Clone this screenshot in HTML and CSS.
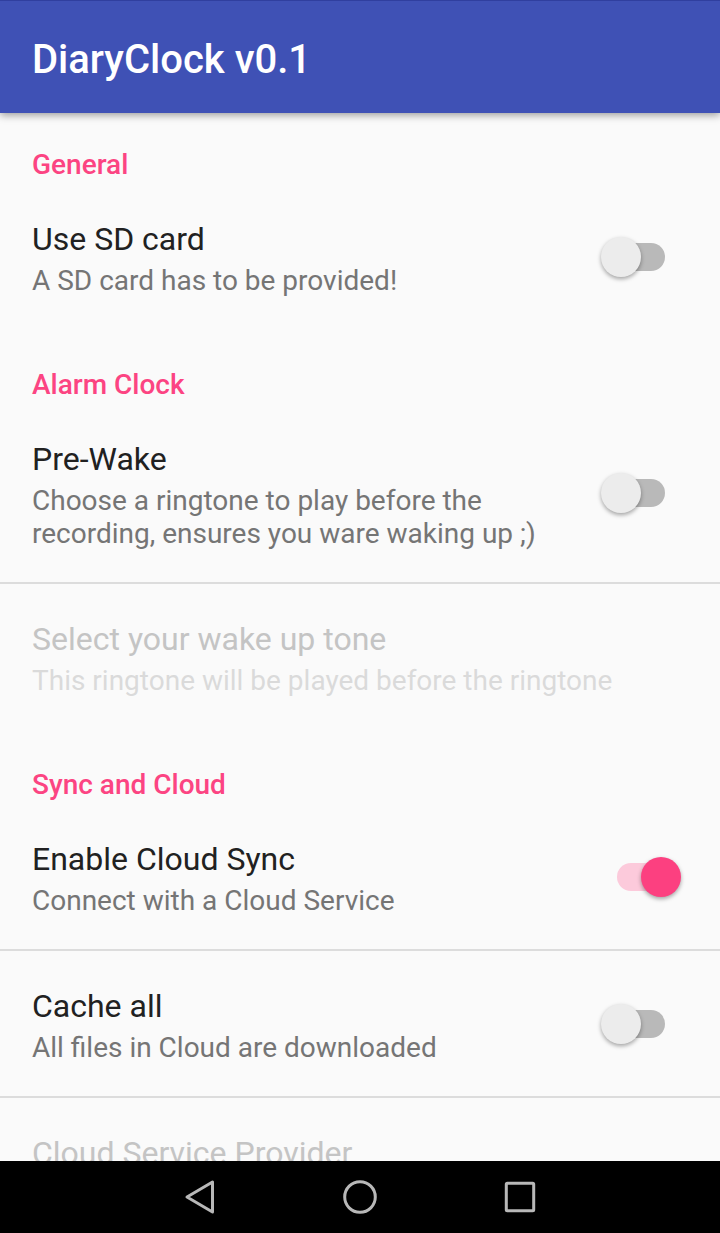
FILE: index.html
```
<!DOCTYPE html>
<html lang="en">
<head>
<meta charset="utf-8">
<meta name="viewport" content="width=device-width, initial-scale=1">
<title>DiaryClock</title>
<link rel="stylesheet" href="styles.css">
</head>
<body>
<div class="screen">
  <header class="app-bar"><h1>DiaryClock v0.1</h1></header>
  <main class="settings">
    <section class="group">
      <h2>General</h2>
      <label class="row">
        <span class="text"><span class="title">Use SD card</span><span class="summary">A SD card has to be provided!</span></span>
        <input class="switch" type="checkbox" role="switch">
      </label>
    </section>
    <section class="group">
      <h2>Alarm Clock</h2>
      <label class="row">
        <span class="text"><span class="title">Pre-Wake</span><span class="summary">Choose a ringtone to play before the recording, ensures you ware waking up ;)</span></span>
        <input class="switch" type="checkbox" role="switch">
      </label>
      <button class="row" type="button" disabled>
        <span class="text"><span class="title">Select your wake up tone</span><span class="summary">This ringtone will be played before the ringtone</span></span>
      </button>
    </section>
    <section class="group">
      <h2>Sync and Cloud</h2>
      <label class="row">
        <span class="text"><span class="title">Enable Cloud Sync</span><span class="summary">Connect with a Cloud Service</span></span>
        <input class="switch" type="checkbox" role="switch" checked>
      </label>
      <label class="row">
        <span class="text"><span class="title">Cache all</span><span class="summary">All files in Cloud are downloaded</span></span>
        <input class="switch" type="checkbox" role="switch">
      </label>
      <button class="row" type="button" disabled>
        <span class="text"><span class="title">Cloud Service Provider</span></span>
      </button>
    </section>
  </main>
  <nav class="nav-bar">
    <button type="button" aria-label="Back"><svg viewBox="0 0 40 40"><path d="M32.5 5v30L7 20z"/></svg></button>
    <button type="button" aria-label="Home"><svg viewBox="0 0 40 40"><circle cx="20" cy="20" r="15.3"/></svg></button>
    <button type="button" aria-label="Recent apps"><svg viewBox="0 0 40 40"><rect x="6.3" y="6.3" width="27.4" height="27.4" rx="1"/></svg></button>
  </nav>
</div>
</body>
</html>
```
FILE: styles.css
```
* { box-sizing: border-box; }
body {
  margin: 0;
  background: #fafafa;
  color: #212121;
  font-family: Roboto, "Noto Sans", sans-serif;
}
.screen {
  display: flex;
  flex-direction: column;
  height: 100vh;
}
.app-bar {
  flex: none;
  z-index: 1;
  display: flex;
  align-items: center;
  height: 113px;
  padding: 6px 32px 0;
  background: #3f51b5;
  border-top: 1px solid #303f9f;
  box-shadow: 0 2px 8px rgba(0, 0, 0, 0.4);
}
h1 {
  margin: 0;
  color: #fff;
  font-size: 40px;
  font-weight: 500;
  line-height: 48px;
}
.settings {
  flex: 1;
  min-height: 0;
  overflow: hidden;
}
.group { padding-top: 34px; }
.group + .group { padding-top: 38px; }
h2 {
  margin: 0;
  padding: 0 32px 1px;
  color: #fc4482;
  font-size: 28px;
  font-weight: 500;
  line-height: 36px;
}
.row {
  display: flex;
  align-items: center;
  width: 100%;
  padding: 32px;
  border: 0;
  background: none;
  color: inherit;
  font: inherit;
  text-align: left;
}
.row + .row { border-top: 2px solid #dcdcdc; }
.text {
  flex: 1;
  display: flex;
  flex-direction: column;
  gap: 2px;
}
.title {
  font-size: 32px;
  line-height: 46px;
}
.summary {
  color: #757575;
  font-size: 28px;
  line-height: 33px;
}
.row:disabled .title { color: #c4c4c4; }
.row:disabled .summary { color: #dadada; }
.switch {
  appearance: none;
  flex: none;
  position: relative;
  width: 96px;
  height: 54px;
  margin: 0 0 0 32px;
}
.switch::before {
  content: "";
  position: absolute;
  top: 13px;
  left: 12px;
  width: 61px;
  height: 28px;
  border-radius: 14px;
  background: #b9b9b9;
}
.switch::after {
  content: "";
  position: absolute;
  top: 7px;
  left: 9px;
  width: 40px;
  height: 40px;
  border-radius: 50%;
  background: #ececec;
  box-shadow: 0 2px 4px rgba(0, 0, 0, 0.35);
}
.switch:checked::before { left: 25px; background: #fccadb; }
.switch:checked::after { left: 49px; background: #fc4080; }
.nav-bar {
  flex: none;
  display: flex;
  justify-content: center;
  gap: 120px;
  height: 72px;
  background: #000;
}
.nav-bar button {
  width: 40px;
  padding: 0;
  border: 0;
  background: none;
}
.nav-bar svg {
  display: block;
  width: 40px;
  height: 40px;
  fill: none;
  stroke: #b8b8b8;
  stroke-width: 3;
  stroke-linejoin: round;
}
```
